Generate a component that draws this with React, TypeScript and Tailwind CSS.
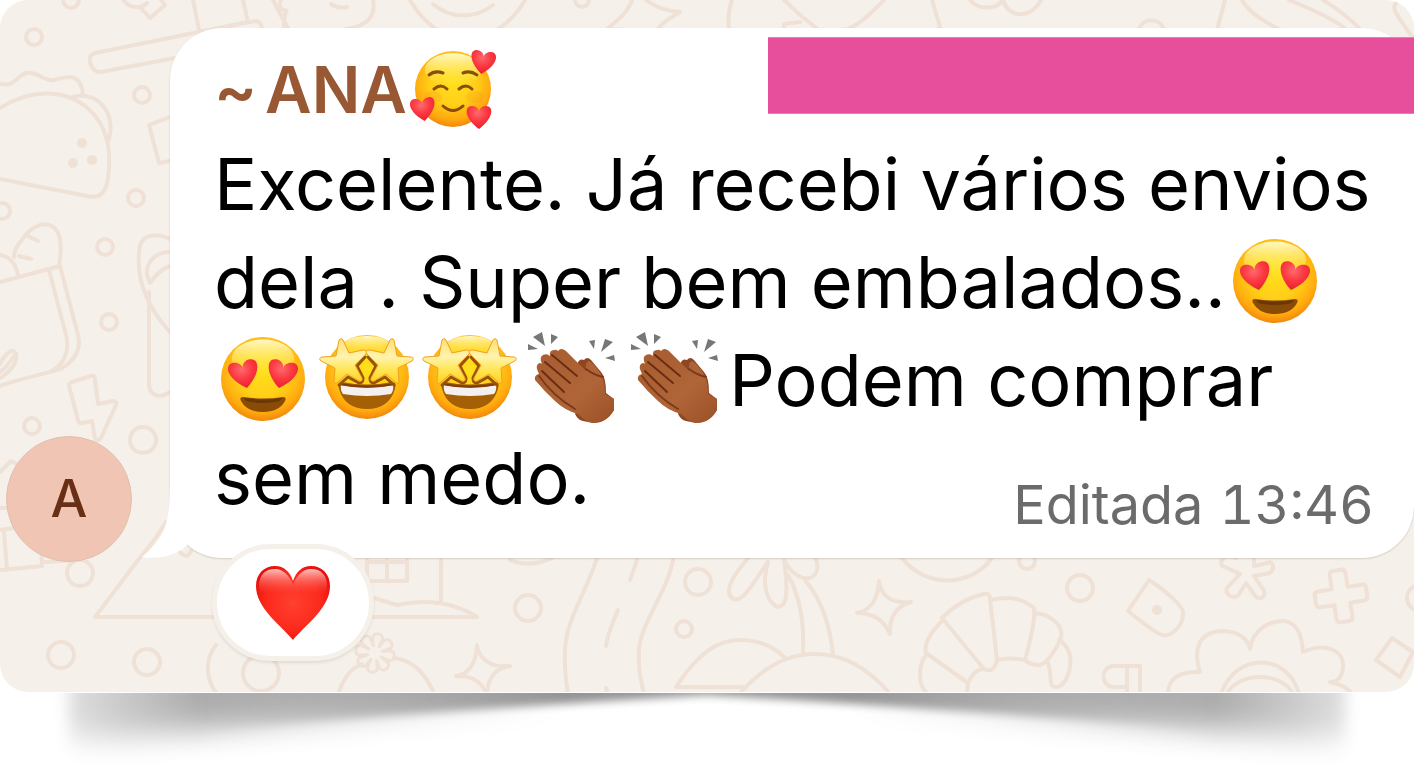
import type { ReactNode } from 'react'

const HEART = 'M0 12 C-15 1 -15 -11 -7 -11 C-3 -11 0 -8 0 -5 C0 -8 3 -11 7 -11 C15 -11 15 1 0 12Z'
const STAR =
  'M24 9Q26 6 28 9L34 22L48 19Q54 19 51 23L40 34L47 47Q48 51 44 50L32 43L22 52Q19 54 19 50L20 37L6 30Q3 27 7 26L21 25Z'

const DOODLES = [
  'M122 -2C128 8 140 10 147 3M141 8L150 18L165 5L160 -2',
  'M248 22L95 53C88 55 89 62 92 67C95 72 100 73 106 71L175 58M193 0L199 30M243 0L248 22',
  'M0 84C16 87 16 76 26 73C38 71 44 82 54 80C66 77 80 71 83 94',
  'M0 108C28 90 62 88 85 106C108 124 112 150 108 178C106 194 98 199 87 196L0 179M70 98C98 88 118 115 108 142',
  'M170 117L149 125L159 163L170 161',
  'M0 255C10 257 15 262 18 275M14 257C14 250 18 244 22 240C30 226 48 218 57 231C62 239 61 254 59 266M28 236L38 241M19 256L31 259',
  'M0 282L60 266L78 335C82 352 72 362 62 368C55 372 20 378 0 386M49 270L66 335C70 350 64 364 53 370',
  'M0 378C10 372 18 362 16 354C12 346 4 356 0 364M0 372C6 368 10 362 14 356',
  'M172 240C160 234 145 232 140 245C134 280 150 310 170 332M170 252C155 252 146 262 147 275L150 283C155 276 163 268 170 266M149 292V385C150 396 160 399 170 392',
  'M72 382L91 376Q95 375 95 380L98 404L113 401Q117 401 116 405L101 438Q97 443 95 438L92 421L82 423Q79 424 78 420L69 386Q69 383 72 382Z',
  'M0 472L11 461L22 467M0 508H10M0 530L14 528L60 524M4 532L7 570M0 570L42 566L41 545M45 562L78 560',
  'M166 522C156 540 144 552 132 568L95 617H476M441 560V602M367 560V581H407V560M387 560V581M367 562H407M374 598L397 605C430 598 455 603 477 617',
  'M180 552Q187 560 191 551M216 645C204 660 206 680 217 694',
  'M338 694C345 675 352 668 362 664M394 658C415 660 428 678 434 694',
  'M477 645C479 660 492 668 510 666C495 668 488 678 487 694C480 680 472 676 456 676C470 674 476 662 477 645Z',
  'M510 560C522 565 538 565 552 558',
  'M597 558C585 595 566 620 565 650C564 670 566 682 568 694M637 560L630 580M618 610C612 625 608 632 606 646M606 688L608 694M673 560C668 590 640 625 639 650C638 670 641 680 644 694',
  'M748 558C738 570 722 590 732 598C742 606 755 580 768 562C760 590 770 604 778 607C788 606 788 590 784 560C790 572 800 580 810 578C820 574 818 562 814 556',
  'M788 575C802 600 804 630 803 652M805 580C822 600 830 625 833 655',
  'M784 657C775 648 760 640 740 640C720 640 700 650 676 687H742M741 692C770 660 795 654 815 654C845 654 870 670 890 694',
  'M879 581C881 596 892 604 911 602C896 606 889 618 890 634C884 620 873 613 857 613C871 610 878 600 879 581Z',
  'M902 558C925 588 970 588 992 558',
  'M942 618C955 605 970 597 984 594Q990 593 990 599L997 660Q994 674 984 669L942 618M990 600C1010 596 1022 598 1034 608Q1036 620 1025 660Q1010 657 997 660',
  'M1034 613C1050 614 1064 625 1061 638Q1050 662 1040 665Q1030 665 1025 660M1059 640C1078 652 1070 680 1060 686C1045 692 1054 672 1047 661',
  'M942 621C928 635 924 645 926 653L968 683C972 675 976 669 984 669M926 655C918 665 918 685 926 692M968 683L967 694',
  'M1149 580C1165 590 1182 605 1183 612C1184 625 1172 637 1162 635C1150 630 1140 620 1128 611Z',
  'M1236 558C1222 552 1217 566 1225 567L1240 574L1227 588C1224 596 1236 600 1239 594L1246 583L1256 597C1264 602 1266 592 1263 589L1254 576L1270 573C1276 568 1272 560 1268 563L1254 566L1254 556',
  'M1168 694C1168 678 1180 671 1200 672C1193 650 1198 632 1222 631C1240 631 1248 640 1250 649C1252 630 1270 620 1285 621C1300 624 1302 640 1303 652C1325 642 1345 650 1343 668C1342 676 1338 682 1330 682C1340 684 1348 688 1352 694',
  'M1221 694C1235 652 1288 652 1299 694M1228 692C1240 672 1280 672 1292 692',
  'M1127 687H1114C1100 687 1100 666 1114 666H1140V694M1127 666V694',
  'M1392 638L1413 652L1400 677L1376 660Z',
  'M200 35Q225 26 256 21Q261 22 263 30M273 0Q280 14 289 30M281 0C276 14 290 8 286 12Q284 16 284 30M331 4Q338 9 347 7M373 0C376 16 368 26 346 29',
  'M410 0Q420 18 437 30M433 4C450 19 476 19 493 5M525 0Q515 18 497 30M632 0C628 12 618 20 607 29L625 30M646 0C656 8 666 11 680 12C670 18 663 22 657 30M732 0Q727 14 729 30M784 0L800 15L820 31M784 30V24L800 22',
  'M884 0C868 16 858 26 845 30M932 0L940 27L936 30M970 0C978 10 996 10 1003 0C1008 18 1030 20 1041 0M1139 30C1142 17 1160 17 1164 30M1225 0L1217 30M1242 0C1250 14 1266 22 1282 31M1289 0C1314 10 1336 20 1348 31M1323 0Q1346 14 1362 31M1397 2C1390 8 1396 14 1416 42',
]

const CIRCLES = [
  [34, 37, 9], [71, 0, 9], [142, 95, 9], [136, 198, 9], [105, 247, 9], [2, 211, 9],
  [109, 322, 9], [32, 426, 9], [143, 440, 14], [80, 573, 14], [61, 655, 14], [147, 662, 14],
  [261, 673, 19], [528, 608, 14], [698, 582, 14], [684, 629, 9], [582, 0, 8],
  [1027, 561, 9], [1080, 588, 14], [1420, 598, 14],
]

function Wallpaper() {
  return (
    <svg
      viewBox="0 0 1414 692"
      preserveAspectRatio="xMinYMin slice"
      className="absolute inset-0 h-full w-full"
      fill="none"
      stroke="#efe1d5"
      strokeWidth="4"
      strokeLinecap="round"
      strokeLinejoin="round"
      aria-hidden="true"
    >
      {DOODLES.map((d) => (
        <path key={d} d={d} />
      ))}
      {CIRCLES.map(([x, y, r]) => (
        <circle key={`${x}-${y}`} cx={x} cy={y} r={r - 1} />
      ))}
      <path
        transform="translate(1341 596) rotate(-9)"
        d="M-8 -22Q-8 -26 -4 -26H4Q8 -26 8 -22V-8H22Q26 -8 26 -4V4Q26 8 22 8H8V22Q8 26 4 26H-4Q-8 26 -8 22V8H-22Q-26 8 -26 4V-4Q-26 -8 -22 -8H-8Z"
      />
      <g transform="translate(375 653) rotate(10)" strokeWidth="3">
        {[0, 45, 90, 135, 180, 225, 270, 315].map((a) => (
          <path key={a} transform={`rotate(${a})`} d="M-3 -7L-5 -15C-5 -21 5 -21 5 -15L3 -7" />
        ))}
      </g>
      <g fill="#efe1d5" stroke="none">
        <circle cx="82" cy="143" r="5" />
        <circle cx="92" cy="160" r="5" />
        <circle cx="73" cy="163" r="5" />
        <circle cx="1157" cy="610" r="5" />
      </g>
    </svg>
  )
}

function Gradients() {
  return (
    <svg className="absolute h-0 w-0" aria-hidden="true">
      <defs>
        <radialGradient id="face" cx="0.5" cy="0.4" r="0.62">
          <stop offset="0" stopColor="#ffe01c" />
          <stop offset="0.5" stopColor="#ffcf18" />
          <stop offset="0.8" stopColor="#ffab0f" />
          <stop offset="1" stopColor="#f0800a" />
        </radialGradient>
        <linearGradient id="shine" x1="0" y1="0" x2="0" y2="1">
          <stop offset="0" stopColor="#fffbd0" stopOpacity="0.95" />
          <stop offset="1" stopColor="#fff04a" stopOpacity="0" />
        </linearGradient>
        <radialGradient id="love" cx="0.45" cy="0.3" r="0.7">
          <stop offset="0" stopColor="#ff6a70" />
          <stop offset="0.5" stopColor="#fb3a42" />
          <stop offset="1" stopColor="#ea1f2c" />
        </radialGradient>
        <linearGradient id="star" x1="0" y1="0" x2="0" y2="1">
          <stop offset="0" stopColor="#ffe070" />
          <stop offset="0.4" stopColor="#fff3ae" />
          <stop offset="0.65" stopColor="#ffe860" />
          <stop offset="1" stopColor="#ffd21c" />
        </linearGradient>
        <linearGradient id="skin" x1="0" y1="0" x2="1" y2="1">
          <stop offset="0" stopColor="#a65c30" />
          <stop offset="0.6" stopColor="#b06538" />
          <stop offset="1" stopColor="#9a4f26" />
        </linearGradient>
        <radialGradient id="red" cx="0.5" cy="0.5" r="0.6">
          <stop offset="0" stopColor="#ff4030" />
          <stop offset="0.6" stopColor="#fc2a1c" />
          <stop offset="1" stopColor="#e60c08" />
        </radialGradient>
        <linearGradient id="gloss" x1="0" y1="0" x2="0" y2="1">
          <stop offset="0" stopColor="#ffd5d0" stopOpacity="0.9" />
          <stop offset="1" stopColor="#ff5a4d" stopOpacity="0" />
        </linearGradient>
      </defs>
    </svg>
  )
}

function Emoji({ label, children }: { label: string; children: ReactNode }) {
  return (
    <svg role="img" aria-label={label} viewBox="3 0 103 98" className="h-[98px] w-[103px] shrink-0">
      {children}
    </svg>
  )
}

function Face({ x, y, r }: { x: number; y: number; r: number }) {
  return (
    <>
      <circle cx={x} cy={y} r={r} fill="url(#face)" />
      <ellipse cx={x} cy={y - r * 0.5} rx={r * 0.74} ry={r * 0.44} fill="url(#shine)" />
    </>
  )
}

function HeartEyes() {
  return (
    <Emoji label="heart eyes">
      <Face x={52} y={48} r={42} />
      <path transform="translate(33 43) rotate(-12) scale(1.2)" d={HEART} fill="url(#love)" />
      <path transform="translate(71 43) rotate(12) scale(1.2)" d={HEART} fill="url(#love)" />
      <path d="M32 66Q52 69 72 66Q76 66 74 70Q68 81 52 81Q36 81 30 70Q28 66 32 66Z" fill="#8a4b06" />
      <path d="M33 67Q52 70 71 67Q69 71 64 71Q52 73 40 71Q35 71 33 67Z" fill="#6b3805" />
    </Emoji>
  )
}

function StarStruck() {
  return (
    <Emoji label="star struck">
      <g transform="translate(1 0)">
        <circle cx="52" cy="46" r="42" fill="url(#face)" />
        <ellipse cx="52" cy="15" rx="24" ry="10" fill="url(#shine)" />
        <path d="M27 51Q52 56 77 51Q82 52 80 58Q74 78 52 78Q30 78 24 58Q22 52 27 51Z" fill="#a55f04" />
        <path d="M26 54Q52 60 78 54Q79 59 76 63Q52 67 28 63Q25 59 26 54Z" fill="#f4f0f0" />
        <path d="M24 53Q52 58 80 53" fill="none" stroke="#7e3e08" strokeWidth="2" />
        <g fill="none" stroke="#9a520a" strokeWidth="3" strokeLinejoin="round" strokeLinecap="round">
          <path d="M50 26L42 35L48 47Q48 52 44 52L33 46L24 54" />
          <path d="M53 26L61 35L55 47Q55 52 59 52L70 46L79 54" />
        </g>
        <path d={STAR} fill="url(#star)" stroke="#f0a020" strokeWidth="1" />
        <path d={STAR} transform="translate(103 0) scale(-1 1)" fill="url(#star)" stroke="#f0a020" strokeWidth="1" />
      </g>
    </Emoji>
  )
}

function Clap() {
  return (
    <Emoji label="clapping hands">
      <g transform="translate(1 0)">
        <path
          d="M56 34Q58 27 63 29Q66 25 70 29L80 41Q85 46 85 62L93 68V79Q85 92 72 92L62 90Q57 89 54 83L66 50Z"
          fill="#8f4722"
        />
        <path
          d="M14 49Q13 44 18 43Q14 35 17 33Q19 31 21 33Q18 26 22 24Q26 22 29 25Q28 19 33 19Q35 18 37 20Q40 16 45 20L65 40Q64 31 68 30Q72 31 79 42Q84 48 84 63L93 68V79Q86 92 72 92Q65 91 57 83Q43 79 34 70Q24 61 14 49Z"
          fill="url(#skin)"
        />
        <g fill="none" stroke="#6b2d12" strokeLinecap="round" strokeWidth="2">
          <path d="M31 24L56 45M24 31L49 52M21 40L43 61" />
          <path d="M65 38Q73 44 82 46M18 45Q32 65 54 78" stroke="#7c3919" />
        </g>
        <path
          d="M7 13L7 19L17 18ZM12 6L21 1L24 15ZM30 3L37 6L30 13ZM68 10L74 9L73 18ZM84 8L92 11L80 21ZM93 24L94 30L84 27Z"
          fill="#757779"
        />
      </g>
    </Emoji>
  )
}

function SmilingHearts() {
  return (
    <svg role="img" aria-label="smiling face with hearts" viewBox="0 0 88 88" className="size-[88px] shrink-0">
      <Face x={44} y={43} r={38} />
      <ellipse cx="24" cy="51" rx="9" ry="6" fill="#fb8520" opacity="0.2" />
      <ellipse cx="66" cy="51" rx="9" ry="6" fill="#fb8520" opacity="0.2" />
      <g fill="none" stroke="#8a4d0a" strokeWidth="3" strokeLinecap="round">
        <path d="M20 29Q26 24 34 27M54 27Q61 24 68 29M25 43Q32 37 38 43M50 43Q57 37 63 43" />
        <path d="M34 60Q44 69 54 60" />
      </g>
      <path transform="translate(74 16) rotate(8)" d={HEART} fill="url(#love)" />
      <path transform="translate(14 63) rotate(-8)" d={HEART} fill="url(#love)" />
      <path transform="translate(70 71)" d={HEART} fill="url(#love)" />
    </svg>
  )
}

function RedHeart() {
  return (
    <svg viewBox="0 0 74 74" className="size-[74px]" aria-hidden="true">
      <path
        d="M37 74C27 61 0 43 0 20C0 8 8 0 19 0C28 0 34 6 37 15C40 6 46 0 55 0C66 0 74 8 74 20C74 43 47 61 37 74Z"
        fill="url(#red)"
      />
      <path d="M3 20C3 9 9 3 19 3C28 3 33 10 37 18V28H4Z" fill="url(#gloss)" />
      <path d="M71 20C71 9 65 3 55 3C46 3 41 10 37 18V28H70Z" fill="url(#gloss)" />
    </svg>
  )
}

function CurledShadow() {
  const shape = 'M68 -40V44Q100 48 150 42Q420 20 707 3Q994 20 1264 42Q1314 48 1346 44V-40Z'
  return (
    <svg viewBox="0 0 1414 90" preserveAspectRatio="none" className="block h-[90px] w-full" aria-hidden="true">
      <defs>
        <filter id="soft" filterUnits="userSpaceOnUse" x="0" y="-80" width="1414" height="220">
          <feGaussianBlur stdDeviation="8 15" />
        </filter>
        <filter id="crisp" filterUnits="userSpaceOnUse" x="0" y="-80" width="1414" height="220">
          <feGaussianBlur stdDeviation="4" />
        </filter>
        <linearGradient id="fadeOut">
          <stop offset="0.04" stopColor="#555" />
          <stop offset="0.14" stopColor="#fff" />
          <stop offset="0.4" stopColor="#000" />
          <stop offset="0.6" stopColor="#000" />
          <stop offset="0.86" stopColor="#fff" />
          <stop offset="0.96" stopColor="#555" />
        </linearGradient>
        <linearGradient id="fadeIn">
          <stop offset="0.14" stopColor="#000" />
          <stop offset="0.4" stopColor="#fff" />
          <stop offset="0.6" stopColor="#fff" />
          <stop offset="0.86" stopColor="#000" />
        </linearGradient>
        <mask id="sides" maskUnits="userSpaceOnUse" x="0" y="0" width="1414" height="90">
          <rect width="1414" height="90" fill="url(#fadeOut)" />
        </mask>
        <mask id="middle" maskUnits="userSpaceOnUse" x="0" y="0" width="1414" height="90">
          <rect width="1414" height="90" fill="url(#fadeIn)" />
        </mask>
      </defs>
      <g mask="url(#sides)">
        <path d={shape} fill="#000" opacity="0.32" filter="url(#soft)" />
      </g>
      <g mask="url(#middle)">
        <path d={shape} fill="#000" opacity="0.42" filter="url(#crisp)" />
      </g>
      <rect width="1414" height="1" fill="#fff" />
    </svg>
  )
}

export default function App() {
  return (
    <main className="overflow-hidden bg-white font-['Inter','Liberation_Sans',sans-serif]">
      <Gradients />
      <section className="relative overflow-hidden rounded-[28px] bg-[#f5f1ea]">
        <Wallpaper />
        <div className="relative flex items-end pt-7 pb-[130px] pl-1.5">
          <div className="flex size-[126px] shrink-0 items-center justify-center rounded-full border border-[#dfc0b1] bg-[#f0c5b3] text-[52px] font-medium text-[#692f16]">
            A
          </div>

          <article className="relative mb-1 ml-[38px] grow rounded-[52px] bg-white pt-[9px] pb-[31px] pl-11 shadow-[0_1px_2px_rgba(60,40,20,0.18)]">
            <svg viewBox="0 0 60 80" className="absolute bottom-0 -left-7 h-20 w-[60px]" fill="#fff" aria-hidden="true">
              <path d="M28 0C28 40 26 58 0 79C16 82 36 77 45 67L60 40V0Z" />
            </svg>

            <header className="relative flex h-[98px] justify-between">
              <h2 className="flex items-center pt-2 text-[64px] font-semibold text-[#985833]">
                <span>~</span>
                <span className="ml-2">ANA</span>
                <span className="ml-0.5">
                  <SmilingHearts />
                </span>
              </h2>
              <div className="h-[77px] w-[646px] border-y border-[#f07cb7] bg-[#e74e9b]" />
            </header>

            <div className="relative text-[72px] leading-[98px] whitespace-nowrap text-black">
              <p>Excelente. Já recebi vários envios</p>
              <p className="flex">
                dela . Super bem embalados..
                <HeartEyes />
              </p>
              <p className="flex">
                <HeartEyes />
                <StarStruck />
                <StarStruck />
                <Clap />
                <Clap />
                Podem comprar
              </p>
              <div className="flex items-end justify-between pr-10">
                <p>sem medo.</p>
                <p className="flex gap-4 text-[54px] leading-[44px] text-[#6b6b6b] tabular-nums">
                  <span>Editada</span>
                  <time>13:46</time>
                </p>
              </div>
            </div>

            <button
              type="button"
              aria-label="Heart reaction"
              className="absolute -bottom-[103px] left-[42px] flex h-[117px] w-[162px] items-center justify-center rounded-full border-[5px] border-[#f5f1ea] bg-white shadow-[0_2px_3px_rgba(60,40,20,0.1)]"
            >
              <RedHeart />
            </button>
          </article>
        </div>
      </section>
      <CurledShadow />
    </main>
  )
}
